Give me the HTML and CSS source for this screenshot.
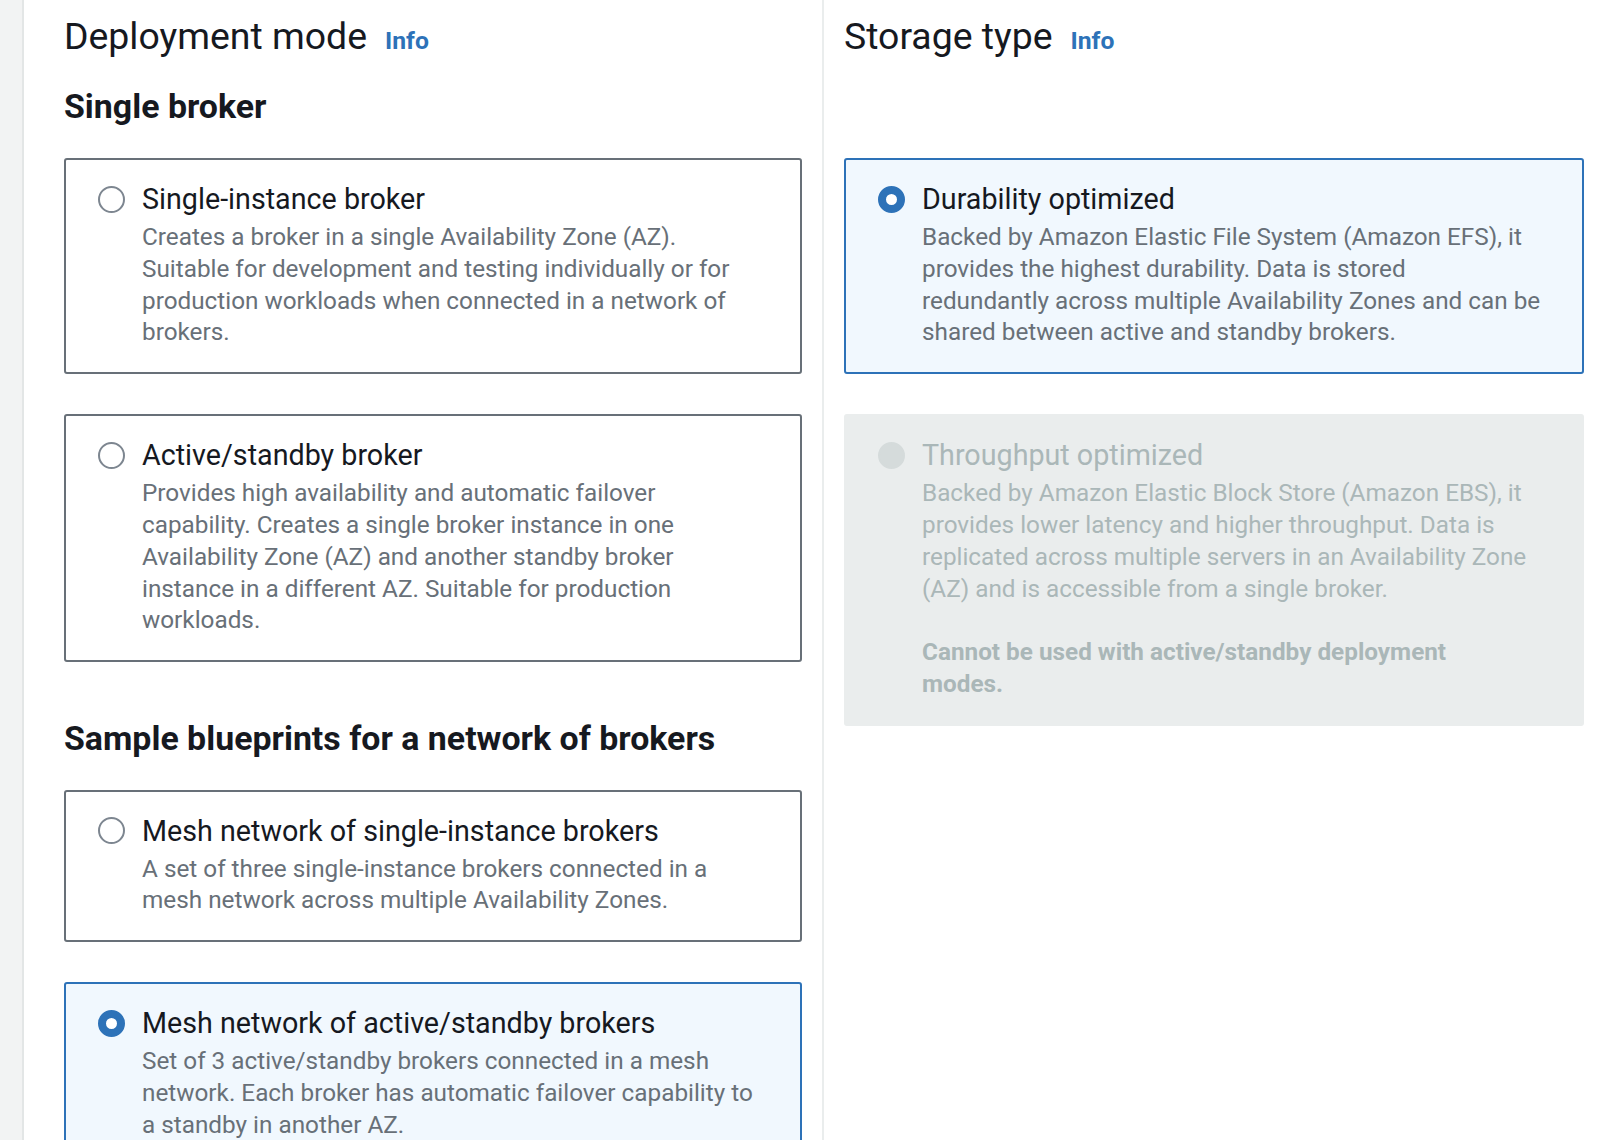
FILE: index.html
```html
<!DOCTYPE html>
<html lang="en">
<head>
<meta charset="utf-8">
<title>Deployment and storage</title>
<link rel="stylesheet" href="styles.css">
</head>
<body>
<div class="page">
  <div class="rail"></div>

  <section class="col col-left">
    <div class="head">
      <h2 class="head-title">Deployment mode</h2>
      <a class="info" href="#">Info</a>
    </div>

    <h3 class="sub">Single broker</h3>
    <div class="tiles">
      <div class="tile">
        <span class="radio"></span>
        <div class="tile-body">
          <div class="tile-title">Single-instance broker</div>
          <p class="desc">Creates a broker in a single Availability Zone (AZ). Suitable for development and testing individually or for production workloads when connected in a network of brokers.</p>
        </div>
      </div>
      <div class="tile">
        <span class="radio"></span>
        <div class="tile-body">
          <div class="tile-title">Active/standby broker</div>
          <p class="desc">Provides high availability and automatic failover capability. Creates a single broker instance in one Availability Zone (AZ) and another standby broker instance in a different AZ. Suitable for production workloads.</p>
        </div>
      </div>
    </div>

    <h3 class="sub sub-second">Sample blueprints for a network of brokers</h3>
    <div class="tiles">
      <div class="tile">
        <span class="radio"></span>
        <div class="tile-body">
          <div class="tile-title">Mesh network of single-instance brokers</div>
          <p class="desc">A set of three single-instance brokers connected in a mesh network across multiple Availability Zones.</p>
        </div>
      </div>
      <div class="tile tile-selected">
        <span class="radio radio-checked"></span>
        <div class="tile-body">
          <div class="tile-title">Mesh network of active/standby brokers</div>
          <p class="desc">Set of 3 active/standby brokers connected in a mesh network. Each broker has automatic failover capability to a standby in another AZ.</p>
        </div>
      </div>
    </div>
  </section>

  <section class="col col-right">
    <div class="head">
      <h2 class="head-title">Storage type</h2>
      <a class="info" href="#">Info</a>
    </div>

    <div class="tiles tiles-storage">
      <div class="tile tile-selected">
        <span class="radio radio-checked"></span>
        <div class="tile-body">
          <div class="tile-title">Durability optimized</div>
          <p class="desc">Backed by Amazon Elastic File System (Amazon EFS), it provides the highest durability. Data is stored<br>redundantly across multiple Availability Zones and can be shared between active and standby brokers.</p>
        </div>
      </div>
      <div class="tile tile-disabled">
        <span class="radio radio-disabled"></span>
        <div class="tile-body">
          <div class="tile-title">Throughput optimized</div>
          <p class="desc">Backed by Amazon Elastic Block Store (Amazon EBS), it provides lower latency and higher throughput. Data is replicated across multiple servers in an Availability Zone (AZ) and is accessible from a single broker.</p>
          <p class="desc desc-warn">Cannot be used with active/standby deployment<br>modes.</p>
        </div>
      </div>
    </div>
  </section>
</div>
</body>
</html>
```

FILE: styles.css
```css
html, body {
  margin: 0;
  padding: 0;
  overflow: hidden;
  background: #ffffff;
}

body {
  font-family: Roboto, "Noto Sans", "Liberation Sans", sans-serif;
  color: #16191f;
}

.page {
  display: flex;
  min-height: 1140px;
}

.rail {
  width: 22px;
  flex: 0 0 22px;
  background: #f2f3f3;
  border-right: 2px solid #e3e6e6;
}

.col {
  padding-top: 13px;
}

.col-left {
  width: 738px;
  flex: 0 0 738px;
  padding-left: 40px;
  padding-right: 20px;
}

.col-right {
  flex: 1 1 auto;
  border-left: 2px solid #eaeded;
  padding-left: 20px;
  padding-right: 26px;
}

.head {
  display: flex;
  align-items: baseline;
  height: 46px;
}

.head-title {
  margin: 0;
  font-size: 37.4px;
  line-height: 46px;
  font-weight: 400;
  color: #16191f;
}

.info {
  margin-left: 18px;
  font-size: 24.7px;
  font-weight: 700;
  color: #2d72b8;
  text-decoration: none;
}

.sub {
  margin: 28px 0 31px;
  font-size: 33.9px;
  line-height: 40px;
  font-weight: 700;
  color: #16191f;
}

.sub-second {
  margin-top: 56.4px;
}

.tiles {
  display: flex;
  flex-direction: column;
  gap: 40px;
}

.tiles-storage {
  margin-top: 99px;
}

.tile {
  display: flex;
  align-items: flex-start;
  gap: 17px;
  padding: 21px 39px 24px 32px;
  border: 2px solid #687078;
  border-radius: 3px;
  background: #ffffff;
}

.col-right .tile {
  padding-right: 20px;
}

.tile-selected {
  border-color: #2d72b8;
  background: #f1f8fe;
}

.tile-disabled {
  border-color: #eaeded;
  background: #eaeded;
}

.radio {
  box-sizing: border-box;
  flex: 0 0 27px;
  width: 27px;
  height: 27px;
  margin-top: 4.5px;
  border: 2px solid #7d8690;
  border-radius: 50%;
  background: #ffffff;
}

.radio-checked {
  border: 8px solid #2d72b8;
  background: #ffffff;
}

.radio-disabled {
  border-color: #d5dbdb;
  background: #d5dbdb;
}

.tile-body {
  flex: 1 1 auto;
  min-width: 0;
}

.tile-title {
  font-size: 28.7px;
  line-height: 36px;
  color: #16191f;
}

.desc {
  margin: 4px 0 0;
  font-size: 24.3px;
  line-height: 31.8px;
  color: #687078;
}

.desc-warn {
  margin-top: 32px;
  font-weight: 700;
}

.tile-disabled .tile-title,
.tile-disabled .desc {
  color: #aab7b8;
}
```
